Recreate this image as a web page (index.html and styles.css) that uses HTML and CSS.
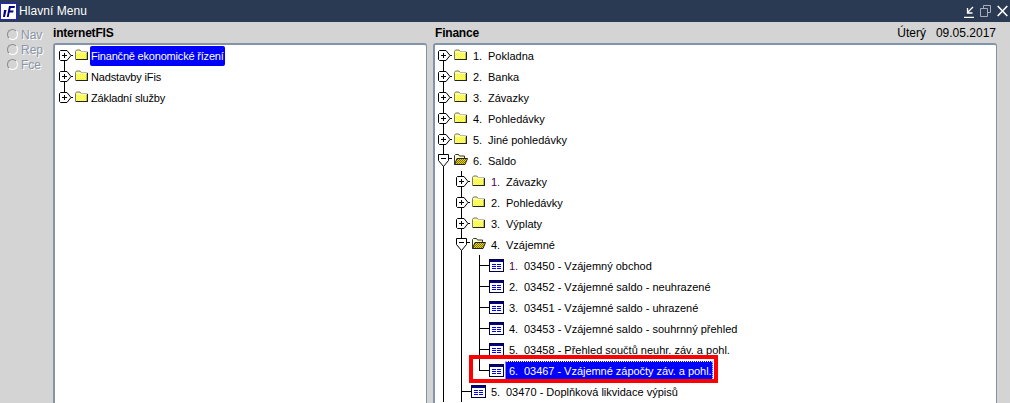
FILE: index.html
```html
<!DOCTYPE html>
<html lang="cs">
<head>
<meta charset="utf-8">
<title>Hlavní Menu</title>
<link rel="stylesheet" href="styles.css">
</head>
<body>
<svg class="defs" width="0" height="0" aria-hidden="true">
  <defs>
    <pattern id="dith" width="2" height="2" patternUnits="userSpaceOnUse"><rect width="2" height="2" fill="#ffff00"/><rect width="1" height="1" fill="#ffffb0"/><rect x="1" y="1" width="1" height="1" fill="#ffffb0"/></pattern>
    <pattern id="dithd" width="2" height="2" patternUnits="userSpaceOnUse"><rect width="2" height="2" fill="#e8d800"/><rect width="1" height="1" fill="#807000"/><rect x="1" y="1" width="1" height="1" fill="#807000"/></pattern>
    <symbol id="plus" viewBox="0 0 14 11"><path d="M1.500.5h6.500l4 5-4 5H1.500l-1-1v-8z" fill="#fff" stroke="#000"/><path d="M3 5.500h5M5.500 3v5" stroke="#000" fill="none"/><path d="M12 5.500h2" stroke="#000"/></symbol>
    <symbol id="minus" viewBox="0 0 14 13"><path d="M.5.5h10v6l-5 6-5-6z" fill="#fff" stroke="#000"/><path d="M3 4.500h5" stroke="#000"/><path d="M11 4.500h3" stroke="#000"/></symbol>
    <symbol id="folder" viewBox="0 0 13 11"><path d="M.5 2.500l1-1.500h3.500l1 1.500h6v8h-11.500z" fill="url(#dith)" stroke="#777"/><path d="M1 3h11" stroke="#fffff0"/><path d="M12.500 3v8M1 10.500h12" stroke="#222"/></symbol>
    <symbol id="open" viewBox="0 0 14 11"><path d="M.5 10.500v-9l1-1h3l1 1.500h5v2" fill="#fffbd0" stroke="#333"/><path d="M.5 10.500l2.500-6h10.500l-2.500 6z" fill="url(#dithd)" stroke="#222"/></symbol>
    <symbol id="doc" viewBox="0 0 15 13"><rect x=".5" y=".5" width="14" height="12" fill="#fff" stroke="#000040"/><path d="M1 1.500h13M1 2.500h13" stroke="#000080"/><path d="M3 5.500h4M8 5.500h4M3 7.500h4M8 7.500h4M3 9.500h4M8 9.500h4" stroke="#0000f0"/></symbol>
  </defs>
</svg>
<header class="titlebar">
  <svg class="logo" width="17" height="17" viewBox="0 0 17 17" aria-hidden="true"><rect x=".5" y=".5" width="16" height="16" fill="#fff" stroke="#2222dd"/><path d="M4.500 4h2M4 7h2.500L5 14H3zM9 3h6l-.5 2h-3.800l-.6 2.500h3.500l-.4 2h-3.600L8.700 14H6.800z" fill="#000080"/></svg>
  <span class="title">Hlavní Menu</span>
  <span class="win">
    <svg width="10" height="13" viewBox="0 0 10 13" aria-hidden="true"><path d="M0 12.500h10M9 2L4 7M3.500 3v5h5" stroke="#fff" stroke-width="1.300" fill="none"/></svg>
    <svg width="11" height="12" viewBox="0 0 11 12" aria-hidden="true"><path d="M3.500 3V.5h7v7H8M.5 3.500h7v8h-7z" stroke="#aab" fill="none"/></svg>
    <svg width="11" height="12" viewBox="0 0 11 12" aria-hidden="true"><path d="M.7 1l9.600 10M10.300 1L.7 11" stroke="#fff" stroke-width="1.600" fill="none"/></svg>
  </span>
</header>
<main class="content">
  <nav class="rail">
    <div class="radio"><i></i>Nav</div>
    <div class="radio"><i></i>Rep</div>
    <div class="radio"><i></i>Fce</div>
  </nav>
  <section class="col col-left">
    <div class="head"><b>internetFIS</b></div>
    <div class="panel">
      <div class="row"><span class="g first"><svg class="ex"><use href="#plus"/></svg></span><svg class="fo"><use href="#folder"/></svg><span class="lbl sel">Finančně ekonomické řízení</span></div>
      <div class="row"><span class="g mid"><svg class="ex"><use href="#plus"/></svg></span><svg class="fo"><use href="#folder"/></svg><span class="lbl">Nadstavby iFis</span></div>
      <div class="row"><span class="g last"><svg class="ex"><use href="#plus"/></svg></span><svg class="fo"><use href="#folder"/></svg><span class="lbl">Základní služby</span></div>
    </div>
  </section>
  <section class="col col-right">
    <div class="head"><b>Finance</b><span class="date">Úterý&nbsp;&nbsp; 09.05.2017</span></div>
    <div class="panel">
      <div class="row"><span class="g first"><svg class="ex"><use href="#plus"/></svg></span><svg class="fo"><use href="#folder"/></svg><span class="lbl"><em>1.</em>Pokladna</span></div>
      <div class="row"><span class="g mid"><svg class="ex"><use href="#plus"/></svg></span><svg class="fo"><use href="#folder"/></svg><span class="lbl"><em>2.</em>Banka</span></div>
      <div class="row"><span class="g mid"><svg class="ex"><use href="#plus"/></svg></span><svg class="fo"><use href="#folder"/></svg><span class="lbl"><em>3.</em>Závazky</span></div>
      <div class="row"><span class="g mid"><svg class="ex"><use href="#plus"/></svg></span><svg class="fo"><use href="#folder"/></svg><span class="lbl"><em>4.</em>Pohledávky</span></div>
      <div class="row"><span class="g mid"><svg class="ex"><use href="#plus"/></svg></span><svg class="fo"><use href="#folder"/></svg><span class="lbl"><em>5.</em>Jiné pohledávky</span></div>
      <div class="row"><span class="g mid"><svg class="ex mn"><use href="#minus"/></svg></span><svg class="fo op"><use href="#open"/></svg><span class="lbl"><em>6.</em>Saldo</span></div>
      <div class="row"><span class="g v"></span><span class="g mid"><svg class="ex"><use href="#plus"/></svg></span><svg class="fo"><use href="#folder"/></svg><span class="lbl"><em class="vis">1.</em>Závazky</span></div>
      <div class="row"><span class="g v"></span><span class="g mid"><svg class="ex"><use href="#plus"/></svg></span><svg class="fo"><use href="#folder"/></svg><span class="lbl"><em>2.</em>Pohledávky</span></div>
      <div class="row"><span class="g v"></span><span class="g mid"><svg class="ex"><use href="#plus"/></svg></span><svg class="fo"><use href="#folder"/></svg><span class="lbl"><em>3.</em>Výplaty</span></div>
      <div class="row"><span class="g v"></span><span class="g mid"><svg class="ex mn"><use href="#minus"/></svg></span><svg class="fo op"><use href="#open"/></svg><span class="lbl"><em>4.</em>Vzájemné</span></div>
      <div class="row"><span class="g v"></span><span class="g v"></span><span class="g mid leaf"></span><svg class="dc"><use href="#doc"/></svg><span class="lbl"><em class="vis">1.</em>03450 - Vzájemný obchod</span></div>
      <div class="row"><span class="g v"></span><span class="g v"></span><span class="g mid leaf"></span><svg class="dc"><use href="#doc"/></svg><span class="lbl"><em>2.</em>03452 - Vzájemné saldo - neuhrazené</span></div>
      <div class="row"><span class="g v"></span><span class="g v"></span><span class="g mid leaf"></span><svg class="dc"><use href="#doc"/></svg><span class="lbl"><em>3.</em>03451 - Vzájemné saldo - uhrazené</span></div>
      <div class="row"><span class="g v"></span><span class="g v"></span><span class="g mid leaf"></span><svg class="dc"><use href="#doc"/></svg><span class="lbl"><em>4.</em>03453 - Vzájemné saldo - souhrnný přehled</span></div>
      <div class="row"><span class="g v"></span><span class="g v"></span><span class="g mid leaf"></span><svg class="dc"><use href="#doc"/></svg><span class="lbl"><em>5.</em>03458 - Přehled součtů neuhr. záv. a pohl.</span></div>
      <div class="row"><span class="g v"></span><span class="g v"></span><span class="g last leaf"></span><svg class="dc"><use href="#doc"/></svg><span class="lbl sel dotted"><em>6.</em>03467 - Vzájemné zápočty záv. a pohl.</span><span class="redbox"></span></div>
      <div class="row"><span class="g v"></span><span class="g mid leaf"></span><svg class="dc"><use href="#doc"/></svg><span class="lbl"><em>5.</em>03470 - Doplňková likvidace výpisů</span></div>
    </div>
  </section>
</main>
</body>
</html>
```

FILE: styles.css
```css
html, body { margin: 0; padding: 0; height: 100%; overflow: hidden; }
body { background: #d4d4d4; font-family: "Liberation Sans", Arial, sans-serif; font-size: 11px; color: #000; display: flex; flex-direction: column; }
.defs { position: absolute; }
.titlebar { height: 22px; flex: none; background: #2a3a52; color: #fff; display: flex; align-items: center; }
.logo { flex: none; }
.title { margin-left: 2px; font-size: 12px; letter-spacing: 0.05px; }
.win { margin-left: auto; display: flex; align-items: center; gap: 6px; padding-right: 2px; }
.content { flex: 1; min-height: 0; display: flex; }
.rail { width: 53px; flex: none; padding-top: 5px; box-sizing: border-box; }
.radio { display: flex; align-items: center; height: 15px; padding-left: 7px; color: #8a95a8; font-size: 12px; text-shadow: 1px 1px 0 #fff; }
.radio i { width: 11px; height: 11px; border: 1px solid #8a8a8a; border-right-color: #fff; border-bottom-color: #fff; border-radius: 50%; margin-right: 3px; box-sizing: border-box; }
.col { display: flex; flex-direction: column; min-height: 0; }
.col-left { width: 374px; }
.col-right { width: 564px; margin-left: 6px; }
.head { height: 21px; flex: none; display: flex; justify-content: space-between; align-items: center; font-size: 12px; }
.head b { letter-spacing: -0.2px; }
.col-right .head { padding-left: 2px; }
.date { font-size: 12px; padding-right: 1px; }
.panel { flex: 1; background: #fff; border: 2px solid #8494a8; border-bottom: 0; border-right-width: 1px; border-radius: 3px 3px 0 0; box-sizing: border-box; padding-left: 1px; overflow: hidden; min-height: 0; }
.col-left .panel { padding-left: 2px; }
.row { height: 21px; display: flex; align-items: center; white-space: nowrap; position: relative; }
.g { width: 18px; height: 21px; flex: none; position: relative; }
.g.v::before, .g.first::before, .g.mid::before, .g.last::before { content: ""; position: absolute; left: 7px; width: 1px; background: #000; }
.g.v::before, .g.mid::before { top: 0; bottom: 0; }
.g.first::before { top: 10px; bottom: 0; }
.g.last::before { top: 0; height: 10px; }
.leaf::after { content: ""; position: absolute; left: 7px; top: 10px; width: 10px; height: 1px; background: #000; }
.ex { position: absolute; left: 2px; top: 5px; width: 14px; height: 11px; }
.ex.mn { top: 4px; height: 13px; }
.fo { width: 13px; height: 11px; flex: none; margin-top: -2px; }
.fo.op { width: 14px; margin-right: -1px; }
.dc { width: 15px; height: 13px; flex: none; margin: -1px 0 0 -1px; }
.lbl { margin-left: 5px; padding: 0 1px; line-height: 20px; height: 20px; color: #000; }
.dc + .lbl { margin-left: 4px; }
.col-left .lbl { margin-left: 2px; letter-spacing: -0.15px; }
.col-left .sel { letter-spacing: -0.19px; }
.lbl em { font-style: normal; display: inline-block; width: 15px; }
.lbl em.vis { color: #500050; }
.sel { background: #0000ff; color: #fff; border-radius: 2px; }
.dc + .dotted { margin-left: 1px; padding: 0 1px 0 4px; letter-spacing: -0.03px; color: #fff; }
.dotted { outline: 1px dotted #fff; outline-offset: -1px; }
.redbox { position: absolute; left: 33px; top: -5px; width: 249px; height: 28px; box-sizing: border-box; border: 4px solid #f00; }
```
